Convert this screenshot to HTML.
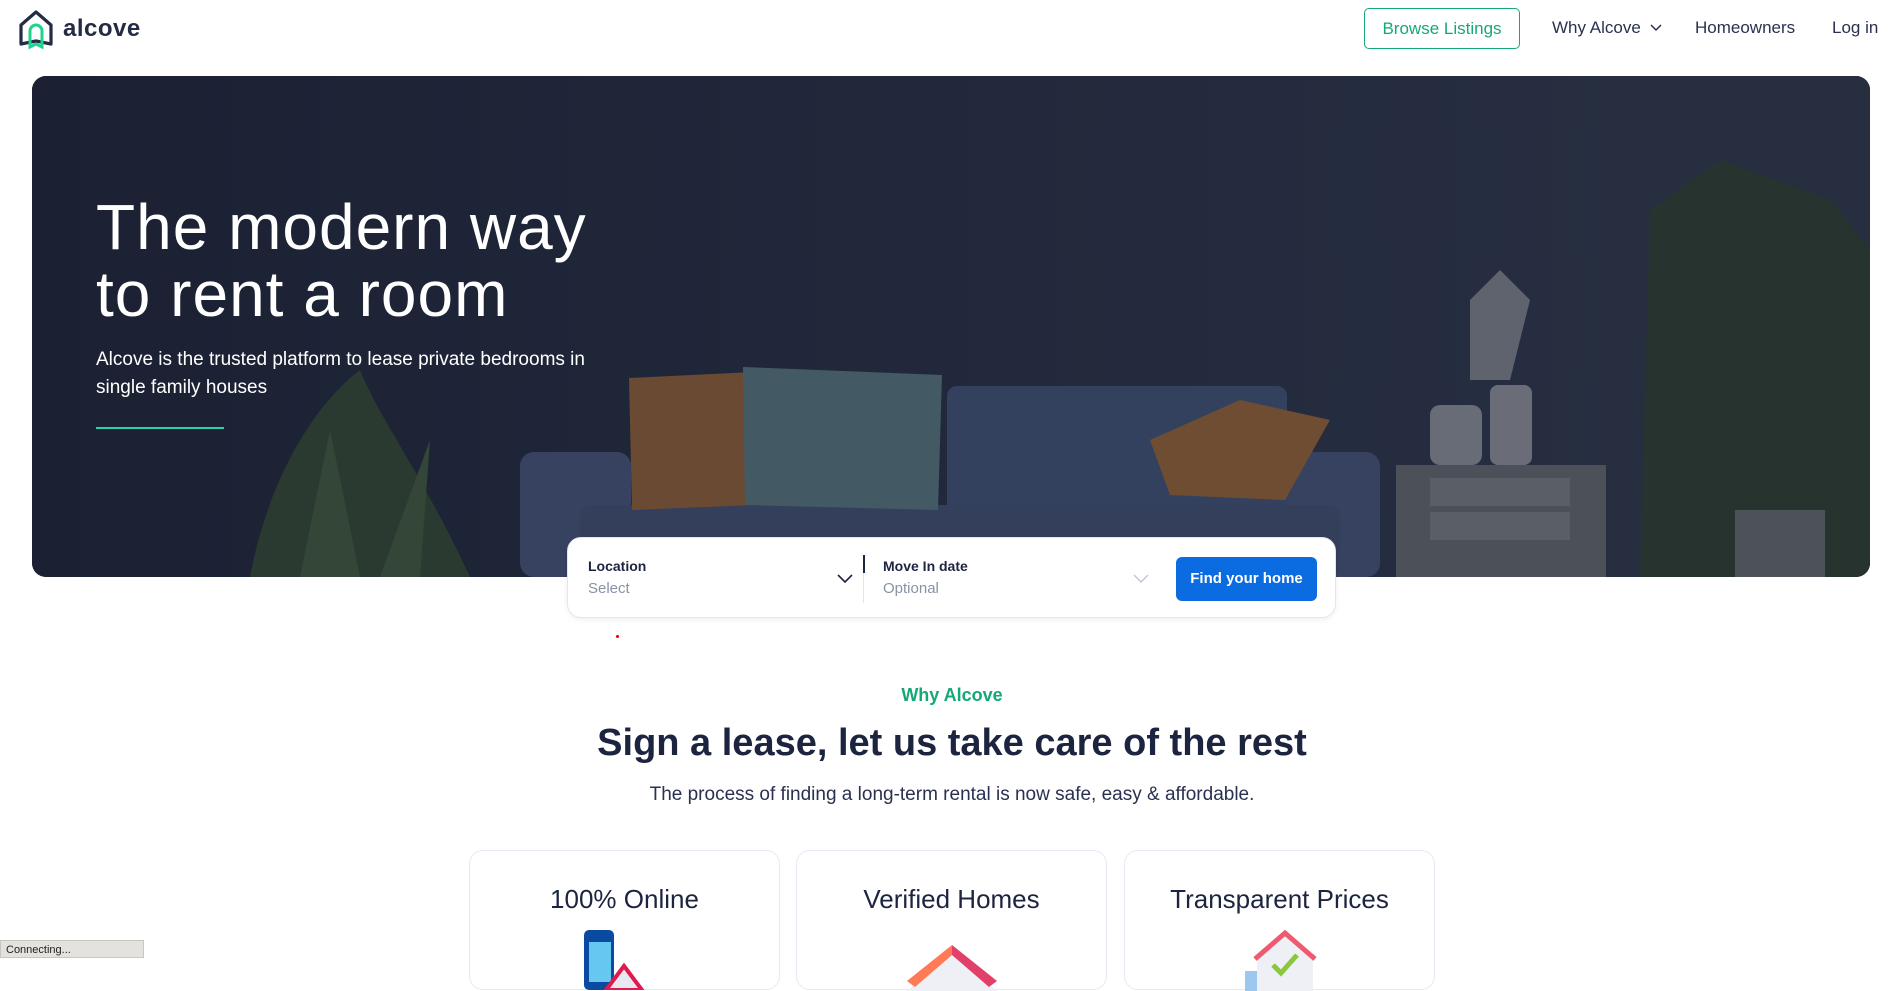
<!DOCTYPE html>
<html><head><meta charset="utf-8">
<style>
*{margin:0;padding:0;box-sizing:border-box}
body{width:1904px;height:958px;overflow:hidden;background:#fff;font-family:"Liberation Sans",sans-serif;color:#1d2440;position:relative}
.abs{position:absolute}
.nav a{position:absolute;font-size:17px;color:#2a3150;text-decoration:none}
.hero{position:absolute;left:32px;top:76px;width:1838px;height:501px;border-radius:14px;overflow:hidden;background:#222a3d}
h1{position:absolute;left:96px;top:194px;font-size:64px;font-weight:400;color:#fff;line-height:67px;letter-spacing:1px}
.sub{position:absolute;left:96px;top:346px;font-size:19px;color:#fff;line-height:28px;width:540px}
.search{position:absolute;left:567px;top:537px;width:769px;height:81px;background:#fff;border-radius:14px;border:1px solid #e3e6f0;box-shadow:0 2px 6px rgba(0,0,0,.06)}
.lbl{position:absolute;font-size:14px;font-weight:bold;color:#1d2440}
.ph{position:absolute;font-size:15px;color:#8a93a5}
.btn{position:absolute;left:608px;top:19px;width:141px;height:44px;background:#0b6be0;color:#fff;font-weight:bold;font-size:15px;border-radius:6px;text-align:center;line-height:44px}
.card{position:absolute;top:850px;width:311px;height:140px;border:1px solid #e6e8f5;border-radius:14px;background:#fff}
.card h3{text-align:center;margin-top:33px;font-size:26px;font-weight:400;color:#1d2440}
</style></head><body>
<svg class="abs" style="left:18px;top:9px" width="38" height="42" viewBox="0 0 38 42">
<path d="M3 35 V16 L18 3 L33 16 V35 L18 32 Z" fill="none" stroke="#232b45" stroke-width="3.2" stroke-linejoin="round"/>
<path d="M12 38 V22 a6 6 0 0 1 12 0 V38 L18 35 Z" fill="none" stroke="#1ed38e" stroke-width="3"/>
</svg>
<div class="abs" style="left:63px;top:15px;font-size:24px;font-weight:bold;color:#232b45;letter-spacing:0.5px">alcove</div>
<div class="nav">
<a style="left:1364px;top:8px;width:156px;height:41px;border:1px solid #15a877;border-radius:5px;color:#15a877;text-align:center;line-height:39px">Browse Listings</a>
<a style="left:1552px;top:18px">Why Alcove</a>
<svg class="abs" style="left:1650px;top:24px" width="12" height="8"><path d="M1 1 L6 6 L11 1" fill="none" stroke="#2a3150" stroke-width="1.5"/></svg>
<a style="left:1695px;top:18px">Homeowners</a>
<a style="left:1832px;top:18px">Log in</a>
</div>
<div class="hero"></div>
<svg class="abs" style="left:32px;top:76px;border-radius:14px" width="1838" height="501" viewBox="32 76 1838 501">
<defs><linearGradient id="bg" x1="0" x2="1"><stop offset="0" stop-color="#1b2133"/><stop offset=".6" stop-color="#232a3d"/><stop offset="1" stop-color="#283043"/></linearGradient></defs>
<rect x="32" y="76" width="1838" height="501" fill="url(#bg)"/>
<rect x="1600" y="76" width="270" height="501" fill="#262e40"/>
<path d="M250 577 C270 470 320 400 360 370 C380 420 420 470 470 577Z" fill="#2b3a30"/>
<path d="M300 577 L330 430 L360 577Z M380 577 L430 440 L420 577Z" fill="#344638"/>
<rect x="520" y="452" width="111" height="125" rx="14" fill="#364260"/>
<rect x="1287" y="452" width="93" height="125" rx="14" fill="#364260"/>
<rect x="947" y="386" width="340" height="130" rx="10" fill="#34415e"/>
<rect x="580" y="505" width="760" height="72" rx="12" fill="#333f5b"/>
<path d="M629 378 L753 372 L756 505 L632 510Z" fill="#6a4a33"/>
<path d="M743 367 L942 375 L938 510 L745 505Z" fill="#435a65"/>
<path d="M1150 440 L1240 400 L1330 420 L1285 500 L1170 495Z" fill="#6e4d32"/>
<rect x="1396" y="465" width="210" height="112" fill="#4c5059"/>
<rect x="1430" y="478" width="140" height="28" fill="#5a5e66"/><rect x="1430" y="512" width="140" height="28" fill="#5a5e66"/>
<rect x="1430" y="405" width="52" height="60" rx="10" fill="#686c76"/>
<rect x="1490" y="385" width="42" height="80" rx="8" fill="#6a6d77"/>
<path d="M1470 300 L1500 270 L1530 300 L1510 380 L1470 380Z" fill="#5e636e"/>
<path d="M1640 577 L1650 210 L1720 160 L1830 200 L1870 250 L1870 577Z" fill="#27332f"/>
<rect x="1735" y="510" width="90" height="67" fill="#4d5158"/>
</svg>
<h1>The modern way<br>to rent a room</h1>
<div class="sub">Alcove is the trusted platform to lease private bedrooms in single family houses</div>
<div class="abs" style="left:96px;top:427px;width:128px;height:2px;background:#2ad0a6"></div>
<div class="search">
<div class="lbl" style="left:20px;top:20px">Location</div>
<div class="ph" style="left:20px;top:42px">Select</div>
<svg class="abs" style="left:269px;top:36px" width="16" height="10"><path d="M1 1 L8 8 L15 1" fill="none" stroke="#1d2440" stroke-width="1.6"/></svg>
<div class="abs" style="left:295px;top:17px;width:1px;height:48px;background:#dfe3ea"></div>
<div class="abs" style="left:295px;top:17px;width:2px;height:18px;background:#1d2440"></div>
<div class="lbl" style="left:315px;top:20px">Move In date</div>
<div class="ph" style="left:315px;top:42px">Optional</div>
<svg class="abs" style="left:565px;top:36px" width="16" height="10"><path d="M1 1 L8 8 L15 1" fill="none" stroke="#c0c6d0" stroke-width="1.4"/></svg>
<div class="btn">Find your home</div>
</div>
<div class="abs" style="left:616px;top:635px;width:3px;height:3px;background:#d00;border-radius:2px"></div>
<div class="abs" style="left:0;width:1904px;top:685px;text-align:center;font-size:18px;font-weight:bold;color:#15a877">Why Alcove</div>
<div class="abs" style="left:0;width:1904px;top:722px;text-align:center;font-size:38px;font-weight:bold;color:#1d2440">Sign a lease, let us take care of the rest</div>
<div class="abs" style="left:0;width:1904px;top:784px;text-align:center;font-size:19px;color:#2a3150">The process of finding a long-term rental is now safe, easy &amp; affordable.</div>
<div class="card" style="left:469px"><h3>100% Online</h3>
<svg class="abs" style="left:114px;top:79px" width="80" height="60"><rect x="0" y="0" width="30" height="60" rx="5" fill="#0a4aa0"/><rect x="5" y="12" width="22" height="40" fill="#66c8f0"/><path d="M22 60 L40 36 L58 60Z" fill="#e8e8f0" stroke="#e0194f" stroke-width="4"/></svg></div>
<div class="card" style="left:796px"><h3>Verified Homes</h3>
<svg class="abs" style="left:110px;top:90px" width="90" height="50"><path d="M0 50 L45 10 L90 50Z" fill="#eef0f5"/><path d="M0 40 L45 4 L45 14 L8 46Z" fill="#ff7a55"/><path d="M90 40 L45 4 L45 14 L82 46Z" fill="#e0406a"/></svg></div>
<div class="card" style="left:1124px"><h3>Transparent Prices</h3>
<svg class="abs" style="left:120px;top:78px" width="80" height="62"><rect x="0" y="42" width="12" height="20" fill="#9cc8f0"/><path d="M12 62 V30 L40 6 L68 30 V62Z" fill="#eef0f5"/><path d="M10 30 L40 4 L70 30" fill="none" stroke="#f05a70" stroke-width="5"/><path d="M28 36 L36 44 L52 26" fill="none" stroke="#8cc63f" stroke-width="5"/></svg></div>
<div class="abs" style="left:0;top:940px;width:144px;height:18px;background:#e4e2dd;border:1px solid #c8c6c0;font-size:11px;color:#222;padding:3px 5px">Connecting...</div>
</body></html>
